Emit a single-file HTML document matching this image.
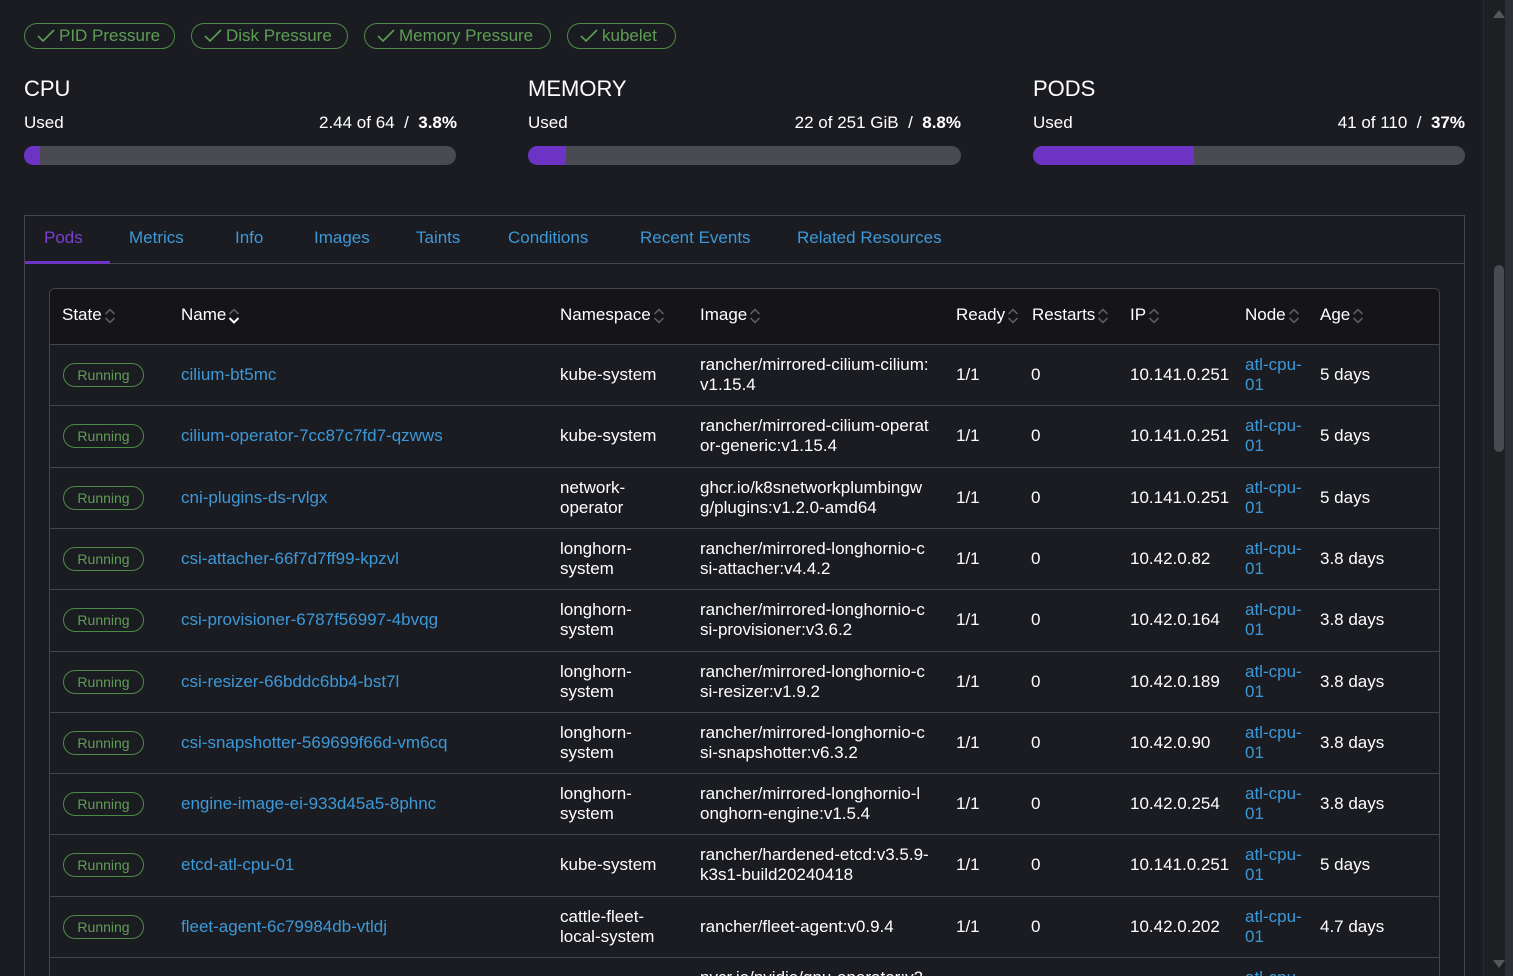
<!DOCTYPE html>
<html style="width:1513px;height:976px;overflow:hidden"><head><meta charset="utf-8"><style>
*{box-sizing:border-box;margin:0;padding:0}
body{width:1513px;height:976px;overflow:hidden;background:#1b1c21;font-family:"Liberation Sans",sans-serif;color:#fff;position:relative;font-size:17px}
.a{position:absolute;white-space:nowrap}
.chip{position:absolute;top:23px;height:26px;border:1px solid #4e8a47;border-radius:13px;color:#5e9e55;font-size:17px;line-height:24px;padding-left:34px}
.chip svg{position:absolute;left:12px;top:5px}
.h{font-size:22px;top:76px}
.u{font-size:17px;top:113px}
.bar{position:absolute;top:146px;height:19px;width:432px;border-radius:10px;background:#4a4b52;overflow:hidden}
.bar i{display:block;height:100%;background:#6d33c4}
.tab{position:absolute;top:228px;color:#3d98d8;font-size:17px}
.row{position:absolute;left:50px;width:1389px;border-top:1px solid #44454b}
.c{position:absolute;line-height:20px;font-size:17px;white-space:nowrap}
.badge{position:absolute;left:13px;width:81px;height:24px;border:1px solid #4e8a47;border-radius:12px;color:#5e9e55;font-size:14px;line-height:22px;text-align:center}
.lnk{color:#3d98d8}
.th{position:absolute;top:305px;font-size:17px}
.sort{display:inline-block;vertical-align:middle;margin-left:2px}
</style></head><body>
<div style="position:absolute;right:0;top:0;width:30px;height:976px;background:#1e1f23;border-left:1px solid #2a2b30;z-index:5"></div>
<div style="position:absolute;left:1505px;top:0;width:8px;height:976px;background:#2e2f34;z-index:6"></div>
<div style="position:absolute;left:1493px;top:10px;width:0;height:0;border-left:6px solid transparent;border-right:6px solid transparent;border-bottom:8px solid #55565c;z-index:6"></div>
<div style="position:absolute;left:1493px;top:960px;width:0;height:0;border-left:6px solid transparent;border-right:6px solid transparent;border-top:8px solid #55565c;z-index:6"></div>
<div style="position:absolute;left:1494px;top:265px;width:10px;height:187px;border-radius:5px;background:#4a4b52;z-index:6"></div>

<div class="chip" style="left:24px;width:151px"><svg width="18" height="14" viewBox="0 0 18 14"><path d="M1 7l5 5L17 1" stroke="#5e9e55" stroke-width="1.6" fill="none"/></svg>PID Pressure</div>
<div class="chip" style="left:191px;width:157px"><svg width="18" height="14" viewBox="0 0 18 14"><path d="M1 7l5 5L17 1" stroke="#5e9e55" stroke-width="1.6" fill="none"/></svg>Disk Pressure</div>
<div class="chip" style="left:364px;width:187px"><svg width="18" height="14" viewBox="0 0 18 14"><path d="M1 7l5 5L17 1" stroke="#5e9e55" stroke-width="1.6" fill="none"/></svg>Memory Pressure</div>
<div class="chip" style="left:567px;width:109px"><svg width="18" height="14" viewBox="0 0 18 14"><path d="M1 7l5 5L17 1" stroke="#5e9e55" stroke-width="1.6" fill="none"/></svg>kubelet</div>

<div class="a h" style="left:24px">CPU</div><div class="a u" style="left:24px">Used</div>
<div class="a u" style="right:1056px">2.44 of 64 &nbsp;/ &nbsp;<b>3.8%</b></div>
<div class="bar" style="left:24px"><i style="width:16px"></i></div>
<div class="a h" style="left:528px">MEMORY</div><div class="a u" style="left:528px">Used</div>
<div class="a u" style="right:552px">22 of 251 GiB &nbsp;/ &nbsp;<b>8.8%</b></div>
<div class="bar" style="left:528px;width:433px"><i style="width:38px"></i></div>
<div class="a h" style="left:1033px">PODS</div><div class="a u" style="left:1033px">Used</div>
<div class="a u" style="right:48px">41 of 110 &nbsp;/ &nbsp;<b>37%</b></div>
<div class="bar" style="left:1033px"><i style="width:161px"></i></div>

<div style="position:absolute;left:24px;top:215px;width:1441px;height:770px;border:1px solid #44454b"></div>
<div style="position:absolute;left:25px;top:263px;width:1439px;height:1px;background:#44454b"></div>
<div style="position:absolute;left:25px;top:261px;width:85px;height:3px;background:#6d33c4"></div>
<div class="tab" style="left:44px;color:#7a3fd0">Pods</div>
<div class="tab" style="left:129px">Metrics</div>
<div class="tab" style="left:235px">Info</div>
<div class="tab" style="left:314px">Images</div>
<div class="tab" style="left:416px">Taints</div>
<div class="tab" style="left:508px">Conditions</div>
<div class="tab" style="left:640px">Recent Events</div>
<div class="tab" style="left:797px">Related Resources</div>

<div style="position:absolute;left:49px;top:288px;width:1391px;height:700px;border:1px solid #44454b;border-radius:6px;border-bottom:none"></div>
<div style="position:absolute;left:50px;top:289px;width:1389px;height:55px;background:#141419;border-radius:5px 5px 0 0"></div>

<div id="th"></div>
<div id="rows" style="position:absolute;left:0;top:0;width:1513px;height:976px;overflow:hidden"></div>
<script>
var sortS='<svg class="sort" width="12" height="18" viewBox="0 0 12 18"><path d="M1.5 7L6 2.5 10.5 7M1.5 11L6 15.5 10.5 11" stroke="#5a5b61" stroke-width="1.6" fill="none"/></svg>';
var sortN='<svg class="sort" width="12" height="18" viewBox="0 0 12 18"><path d="M1.5 7L6 2.5 10.5 7" stroke="#5a5b61" stroke-width="1.6" fill="none"/><path d="M1.5 11L6 15.5 10.5 11" stroke="#fff" stroke-width="2" fill="none"/></svg>';
var hs=[["State",62],["Name",181],["Namespace",560],["Image",700],["Ready",956],["Restarts",1032],["IP",1130],["Node",1245],["Age",1320]];
var h='';hs.forEach(function(x){h+='<div class="a th" style="left:'+x[1]+'px">'+x[0]+(x[0]=="Name"?sortN:sortS)+'</div>'});
document.getElementById('th').innerHTML=h;
var R=[["cilium-bt5mc","kube-system","rancher/mirrored-cilium-cilium:<br>v1.15.4","10.141.0.251","5 days"],
["cilium-operator-7cc87c7fd7-qzwws","kube-system","rancher/mirrored-cilium-operat<br>or-generic:v1.15.4","10.141.0.251","5 days"],
["cni-plugins-ds-rvlgx","network-<br>operator","ghcr.io/k8snetworkplumbingw<br>g/plugins:v1.2.0-amd64","10.141.0.251","5 days"],
["csi-attacher-66f7d7ff99-kpzvl","longhorn-<br>system","rancher/mirrored-longhornio-c<br>si-attacher:v4.4.2","10.42.0.82","3.8 days"],
["csi-provisioner-6787f56997-4bvqg","longhorn-<br>system","rancher/mirrored-longhornio-c<br>si-provisioner:v3.6.2","10.42.0.164","3.8 days"],
["csi-resizer-66bddc6bb4-bst7l","longhorn-<br>system","rancher/mirrored-longhornio-c<br>si-resizer:v1.9.2","10.42.0.189","3.8 days"],
["csi-snapshotter-569699f66d-vm6cq","longhorn-<br>system","rancher/mirrored-longhornio-c<br>si-snapshotter:v6.3.2","10.42.0.90","3.8 days"],
["engine-image-ei-933d45a5-8phnc","longhorn-<br>system","rancher/mirrored-longhornio-l<br>onghorn-engine:v1.5.4","10.42.0.254","3.8 days"],
["etcd-atl-cpu-01","kube-system","rancher/hardened-etcd:v3.5.9-<br>k3s1-build20240418","10.141.0.251","5 days"],
["fleet-agent-6c79984db-vtldj","cattle-fleet-<br>local-system","rancher/fleet-agent:v0.9.4","10.42.0.202","4.7 days"],
["","","nvcr.io/nvidia/gpu-operator:v2<br>x","",""]];
var s='';
R.forEach(function(r,i){var t=344+i*61.3;var m=30;
 s+='<div class="row" style="top:'+t+'px;height:62px">';
 s+='<div class="badge" style="top:'+(m-12)+'px">Running</div>';
 s+='<div class="c lnk" style="left:131px;top:'+(m-10)+'px">'+r[0]+'</div>';
 var ml=r[1].indexOf('<br>')>=0;
 s+='<div class="c" style="left:510px;top:'+(m-(ml?20:10))+'px">'+r[1]+'</div>';
 var il=r[2].indexOf('<br>')>=0;
 s+='<div class="c" style="left:650px;top:'+(m-(il?20:10))+'px">'+r[2]+'</div>';
 s+='<div class="c" style="left:906px;top:'+(m-10)+'px">1/1</div>';
 s+='<div class="c" style="left:981px;top:'+(m-10)+'px">0</div>';
 s+='<div class="c" style="left:1080px;top:'+(m-10)+'px">'+r[3]+'</div>';
 s+='<div class="c lnk" style="left:1195px;top:'+(m-20)+'px">atl-cpu-<br>01</div>';
 s+='<div class="c" style="left:1270px;top:'+(m-10)+'px">'+r[4]+'</div>';
 s+='</div>';});
document.getElementById('rows').innerHTML=s;
</script>
</body></html>
